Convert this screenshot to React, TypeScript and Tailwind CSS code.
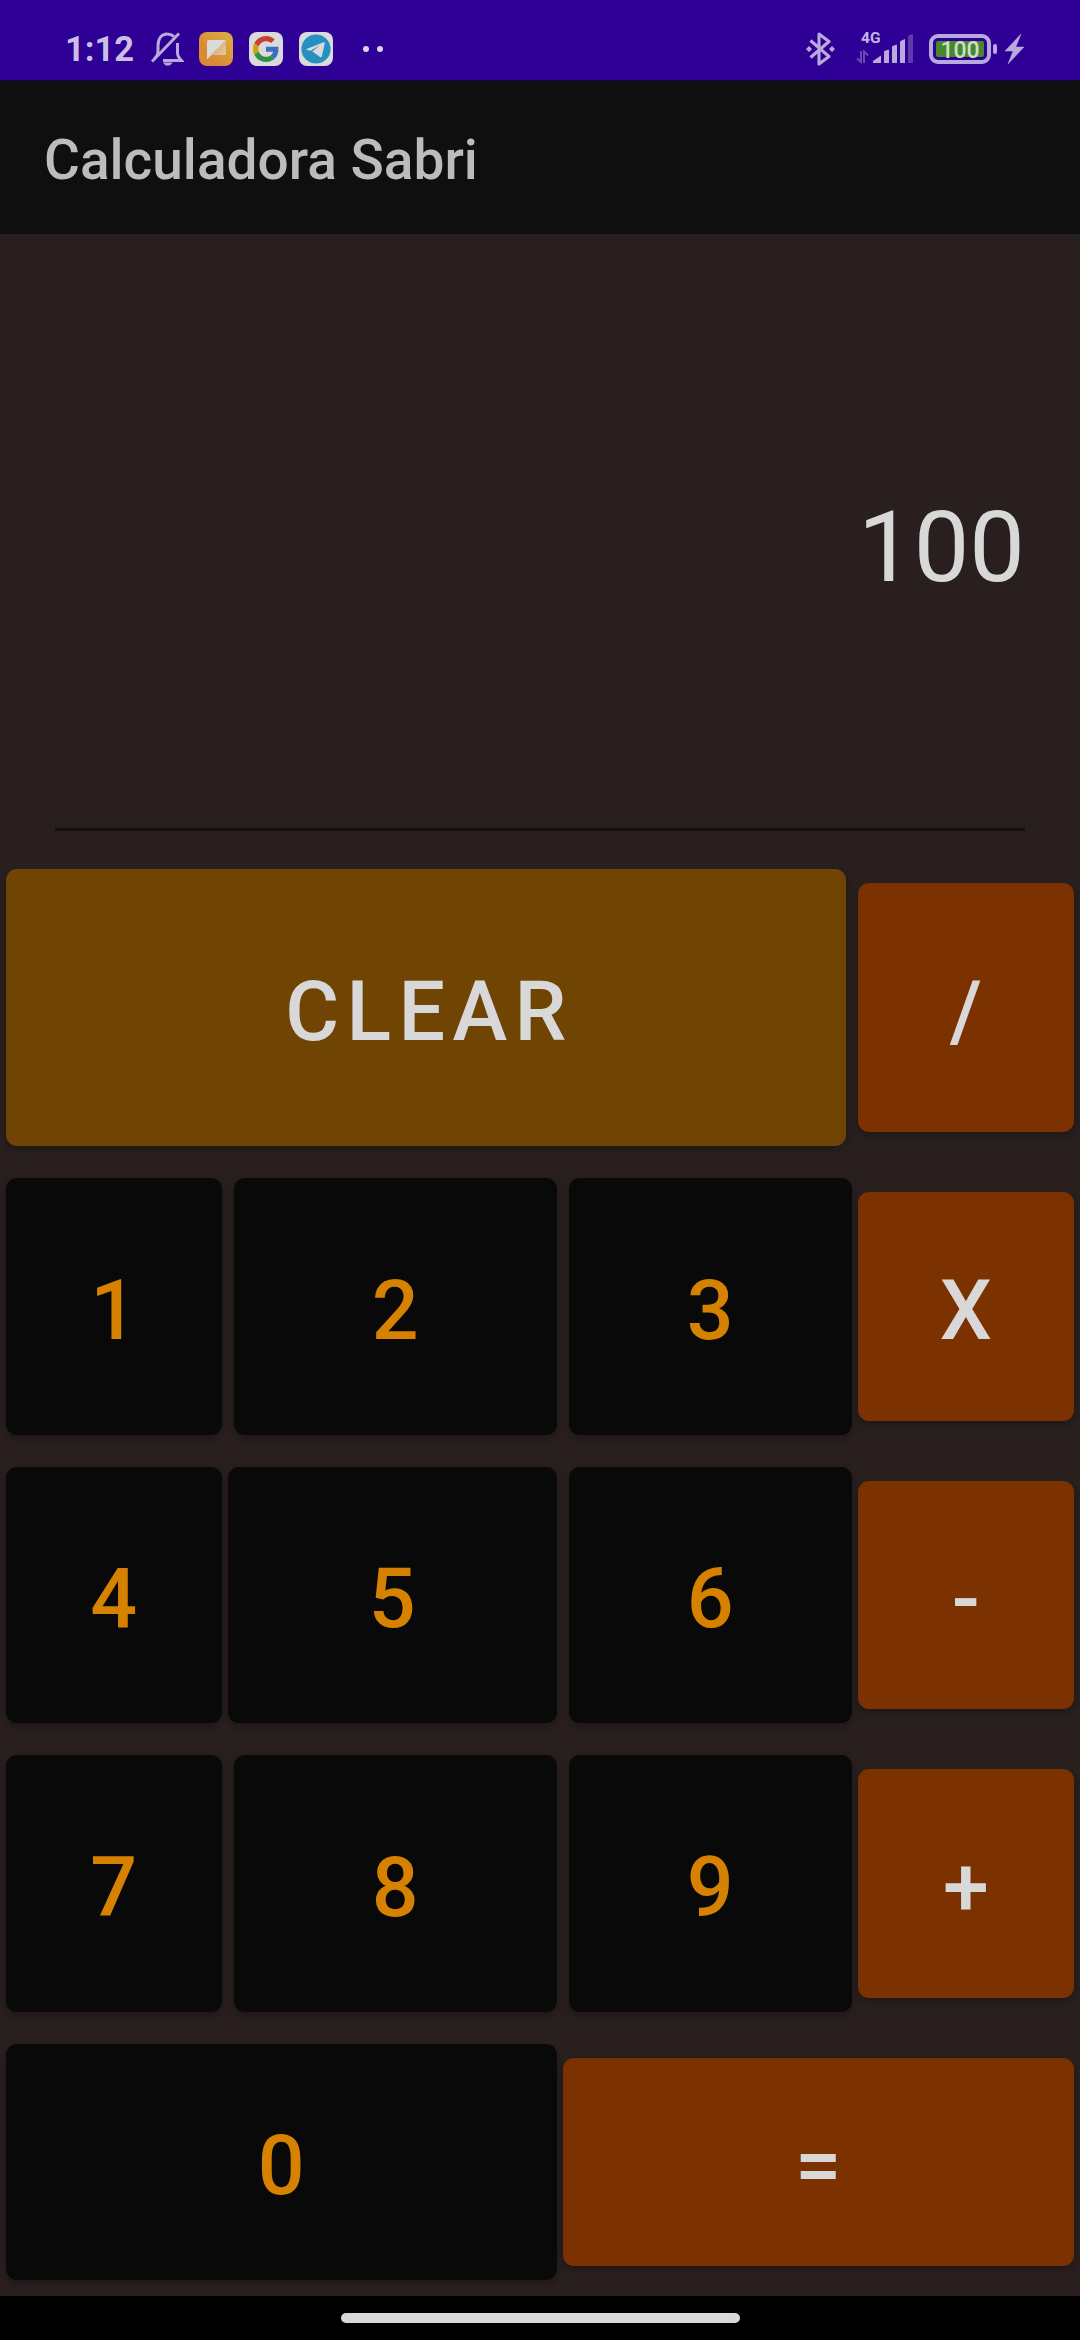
import type { ReactNode } from "react";

const tones = {
  digit: "bg-[#090909] text-[#d68100]",
  operator: "bg-[#7b3200] text-[#d8d8d8]",
  clear: "bg-[#704503] text-[#d8d8d8]",
};

type KeyProps = { label: string; tone: keyof typeof tones; size: string };

function Key({ label, tone, size }: KeyProps) {
  return (
    <button
      className={`flex shrink-0 items-center justify-center rounded-[11px] pt-[9px] text-[82.5px] leading-none font-medium shadow-[0_3px_6px_rgba(0,0,0,0.25)] ${tones[tone]} ${size}`}
    >
      <span className="ml-[7px] tracking-[7.4px]">{label}</span>
    </button>
  );
}

function Row({ children }: { children: ReactNode }) {
  return <div className="flex items-center">{children}</div>;
}

function MutedBell() {
  return (
    <svg className="ml-[17px] h-[34px] w-[33px]" viewBox="0 0 33 34" fill="none" stroke="#b9a9dc" strokeWidth="3">
      <path d="M7 21V14C7 6 11 2 16 2C19 2 21 2.900 23 4.500" />
      <path d="M26.500 11V21C26.500 24 28 26 30.500 28.500H12" />
      <path d="M1 29.500L28 1.500" />
      <path d="M7 20C6.500 23 5 25 3.500 26.500" strokeWidth="2.500" />
      <path d="M12 30.500H21.500C20 33 18.500 33.500 16.700 33.500C15 33.500 13.500 33 12 30.500Z" fill="#b9a9dc" stroke="none" />
    </svg>
  );
}

function NotesApp() {
  return (
    <svg className="ml-[15px] size-[34px]" viewBox="0 0 34 34">
      <defs>
        <linearGradient id="notes" x1="0" y1="1" x2="1" y2="0">
          <stop offset="0.3" stopColor="#d98a35" />
          <stop offset="1" stopColor="#dcb043" />
        </linearGradient>
        <linearGradient id="fold" x1="0" y1="0" x2="1" y2="1">
          <stop offset="0.4" stopColor="#dfb078" />
          <stop offset="1" stopColor="#dfcda6" />
        </linearGradient>
      </defs>
      <rect width="34" height="34" rx="8" fill="url(#notes)" />
      <path d="M27 8V21.500Q27 23 25.500 23H13Z" fill="url(#fold)" />
      <path d="M9.500 8H27L8 27.500V9.500Q8 8 9.500 8Z" fill="#dadad8" />
    </svg>
  );
}

function GoogleApp() {
  return (
    <svg className="ml-4 size-[34px]" viewBox="0 0 34 34">
      <rect width="34" height="34" rx="8" fill="#dadadd" />
      <g transform="translate(4 4) scale(0.542)">
        <path fill="#c63f32" d="M24 9.500c3.540 0 6.710 1.220 9.210 3.600l6.850-6.850C35.900 2.380 30.470 0 24 0 14.620 0 6.510 5.380 2.560 13.220l7.980 6.190C12.430 13.720 17.740 9.500 24 9.500z" />
        <path fill="#3c6fc4" d="M46.980 24.550c0-1.570-.15-3.090-.38-4.550H24v9.020h12.940c-.58 2.960-2.260 5.480-4.780 7.180l7.730 6c4.510-4.180 7.090-10.360 7.090-17.650z" />
        <path fill="#d49f10" d="M10.530 28.590c-.48-1.450-.76-2.990-.76-4.590s.27-3.140.76-4.590l-7.980-6.190C.92 16.460 0 20.120 0 24c0 3.880.92 7.540 2.560 10.780l7.970-6.190z" />
        <path fill="#2f9148" d="M24 48c6.480 0 11.930-2.130 15.890-5.810l-7.730-6c-2.150 1.450-4.920 2.300-8.160 2.300-6.260 0-11.570-4.220-13.470-9.910l-7.980 6.190C6.510 42.620 14.620 48 24 48z" />
      </g>
    </svg>
  );
}

function TelegramApp() {
  return (
    <svg className="ml-4 size-[34px]" viewBox="0 0 34 34">
      <rect width="34" height="34" rx="8" fill="#dadadd" />
      <circle cx="17" cy="17" r="14.600" fill="#2590c2" />
      <path d="M7.500 17L24.600 10.300Q26 9.900 25.700 11.500L22.900 24.300Q22.500 25.800 21.100 24.900L13.300 19.400L20.800 13.200L11.500 18.700L7.700 17.700Q6.800 17.300 7.500 17Z" fill="#dadadd" />
    </svg>
  );
}

function Bluetooth() {
  return (
    <svg className="h-[34px] w-[29px]" viewBox="0 0 29 34" fill="none" stroke="#b9a9dc" strokeWidth="3.100">
      <path d="M4.500 8.500L23 24.500L13 32V2L23 9.500L4.500 25.500" strokeLinejoin="round" />
      <path d="M3 14L6 17L3 20L0 17ZM26 14L29 17L26 20L23 17Z" fill="#b9a9dc" stroke="none" />
    </svg>
  );
}

function Signal() {
  return (
    <div className="relative ml-[21px] h-[34px] w-[58px]">
      <span className="absolute top-[-1px] left-[5px] text-[15.5px] leading-[15px] font-bold text-[#c4b6e2]">4G</span>
      <svg className="absolute inset-0 size-full" viewBox="0 0 58 34">
        <g fill="#b9a9dc">
          <path d="M17 31V29L25 23.500V31Z" />
          <path d="M28 31V20Q28 19 29 18.700L33 17.500V31Z" />
          <path d="M36 31V15Q36 14 37 13.700L41 12.500V31Z" />
          <path d="M44 31V10Q44 9 45 8.700L49 7V31Z" />
        </g>
        <path d="M52 31V5Q52 3.500 53.500 3L57 2V31Z" fill="#5f38aa" />
        <path d="M5 19V30L1 26.500M8 31V19.500L12 23.500" fill="none" stroke="#6a48b4" strokeWidth="2" />
      </svg>
    </div>
  );
}

function Battery() {
  return (
    <div className="ml-[15px] flex items-center">
      <div className="flex h-[30px] w-[62px] items-center justify-center rounded-[9px] border-[4.5px] border-[#b9a9dc]">
        <div className="flex h-4 w-12 items-center justify-center rounded-[2px] bg-[#45892b] text-[23px] leading-none font-medium text-[#d0dccb]">
          <span className="pt-[2px]">100</span>
        </div>
      </div>
      <div className="ml-[2px] h-[10px] w-1 rounded-[2px] bg-[#b9a9dc]" />
      <svg className="ml-[8px] h-[30px] w-[19px]" viewBox="0 0 19 30">
        <path d="M16 0L0 17H8L3 30L19 13H10.800Z" fill="#b9a9dc" stroke="#b9a9dc" strokeWidth="0.500" />
      </svg>
    </div>
  );
}

export default function App() {
  return (
    <div className="flex h-[2340px] w-[1080px] flex-col overflow-hidden bg-[#281f1e] font-[Roboto,sans-serif]">
      <header className="flex h-20 shrink-0 items-center justify-between bg-[#2e0095] pt-[18px] pr-14 pl-[65px]">
        <div className="flex items-center">
          <span className="w-[69px] text-[34.5px] leading-[34px] font-bold text-[#cbbfe3]">1:12</span>
          <MutedBell />
          <NotesApp />
          <GoogleApp />
          <TelegramApp />
          <div className="ml-[30px] flex gap-2">
            <i className="size-[6px] rounded-full bg-[#dad5e6]" />
            <i className="size-[6px] rounded-full bg-[#dad5e6]" />
          </div>
        </div>
        <div className="flex items-center">
          <Bluetooth />
          <Signal />
          <Battery />
        </div>
      </header>

      <div className="flex h-[154px] shrink-0 items-center border-t border-[#15052f] bg-[#0f0f0f] pt-[5px] pl-11">
        <h1 className="text-[55px] leading-none font-medium text-[#bcbcbc]">Calculadora Sabri</h1>
      </div>

      <section className="h-[635px] shrink-0 px-[55px] pt-[255px]">
        <div className="h-[342px] border-b-[3px] border-[#141010] text-right text-[99px] leading-[116px] text-[#d8d8d8]">
          100
        </div>
      </section>

      <main className="flex shrink-0 flex-col gap-8 px-[6px] pb-4">
        <Row>
          <Key label="CLEAR" tone="clear" size="mr-3 h-[277px] w-[840px]" />
          <Key label="/" tone="operator" size="h-[249px] w-[216px]" />
        </Row>
        <Row>
          <Key label="1" tone="digit" size="mr-3 h-[257px] w-[216px]" />
          <Key label="2" tone="digit" size="mr-3 h-[257px] w-[323px]" />
          <Key label="3" tone="digit" size="mr-[6px] h-[257px] w-[283px]" />
          <Key label="X" tone="operator" size="h-[229px] w-[216px]" />
        </Row>
        <Row>
          <Key label="4" tone="digit" size="mr-[6px] h-[256px] w-[216px]" />
          <Key label="5" tone="digit" size="mr-3 h-[256px] w-[329px]" />
          <Key label="6" tone="digit" size="mr-[6px] h-[256px] w-[283px]" />
          <Key label="-" tone="operator" size="h-[228px] w-[216px]" />
        </Row>
        <Row>
          <Key label="7" tone="digit" size="mr-3 h-[257px] w-[216px]" />
          <Key label="8" tone="digit" size="mr-3 h-[257px] w-[323px]" />
          <Key label="9" tone="digit" size="mr-[6px] h-[257px] w-[283px]" />
          <Key label="+" tone="operator" size="h-[229px] w-[216px]" />
        </Row>
        <Row>
          <Key label="0" tone="digit" size="mr-[6px] h-[236px] w-[551px]" />
          <Key label="=" tone="operator" size="h-[208px] w-[511px]" />
        </Row>
      </main>

      <footer className="flex h-11 shrink-0 items-center justify-center bg-black">
        <div className="h-[10px] w-[399px] rounded-full bg-[#d8d8d8]" />
      </footer>
    </div>
  );
}
